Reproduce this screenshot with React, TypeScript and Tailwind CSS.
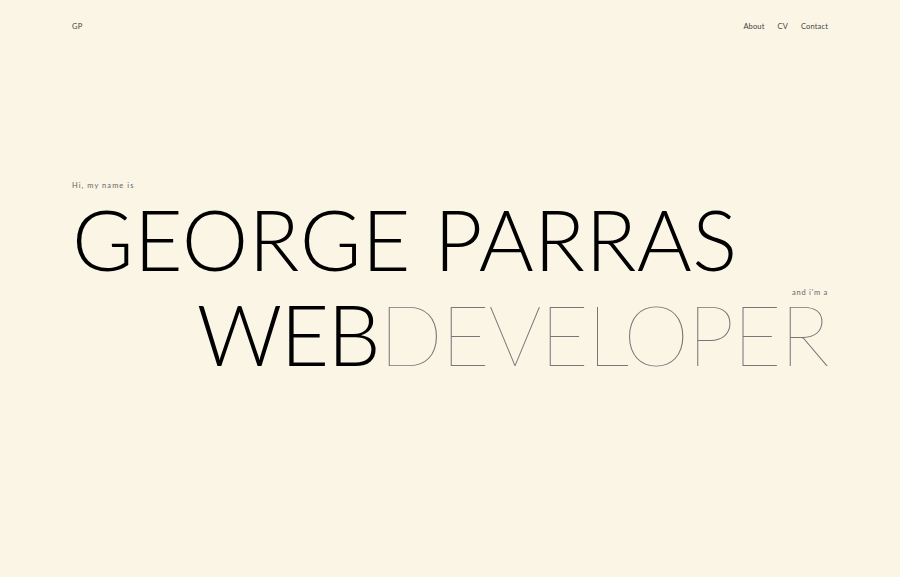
import React from 'react';

const navLinks = ['About', 'CV', 'Contact'];

const App: React.FC = () => {
  return (
    <div className="min-h-screen w-full bg-[#faf5e5] text-[#111] font-['Lato','Liberation_Sans',sans-serif]">
      <div className="mx-[72px] flex flex-col">
        {/* Header */}
        <header className="flex items-center justify-between pt-[21px] text-[7.5px] text-[#444]">
          <span className="tracking-[0.05em]">GP</span>
          <nav className="flex gap-[13px]">
            {navLinks.map(link => (
              <span key={link} className="tracking-[0.02em]">{link}</span>
            ))}
          </nav>
        </header>

        {/* Hero */}
        <section className="mt-[150px] flex flex-col">
          <p className="text-[7.5px] leading-none tracking-[0.14em] text-[#666]">Hi, my name is</p>
          <h1 className="mt-[13px] text-[84px] leading-[72px] font-light tracking-[0.004em] text-black">GEORGE PARRAS</h1>
          <p className="mt-[14px] self-end text-[7.5px] leading-none tracking-[0.1em] text-[#666]">and i'm a</p>
          <h2 className="self-end mt-[2px] text-[84px] leading-[72px] tracking-[-0.02em]">
            <span className="font-light text-black">WEB</span>
            <span className="font-thin text-[#777]">DEVELOPER</span>
          </h2>
        </section>
      </div>
    </div>
  );
};

export default App;
